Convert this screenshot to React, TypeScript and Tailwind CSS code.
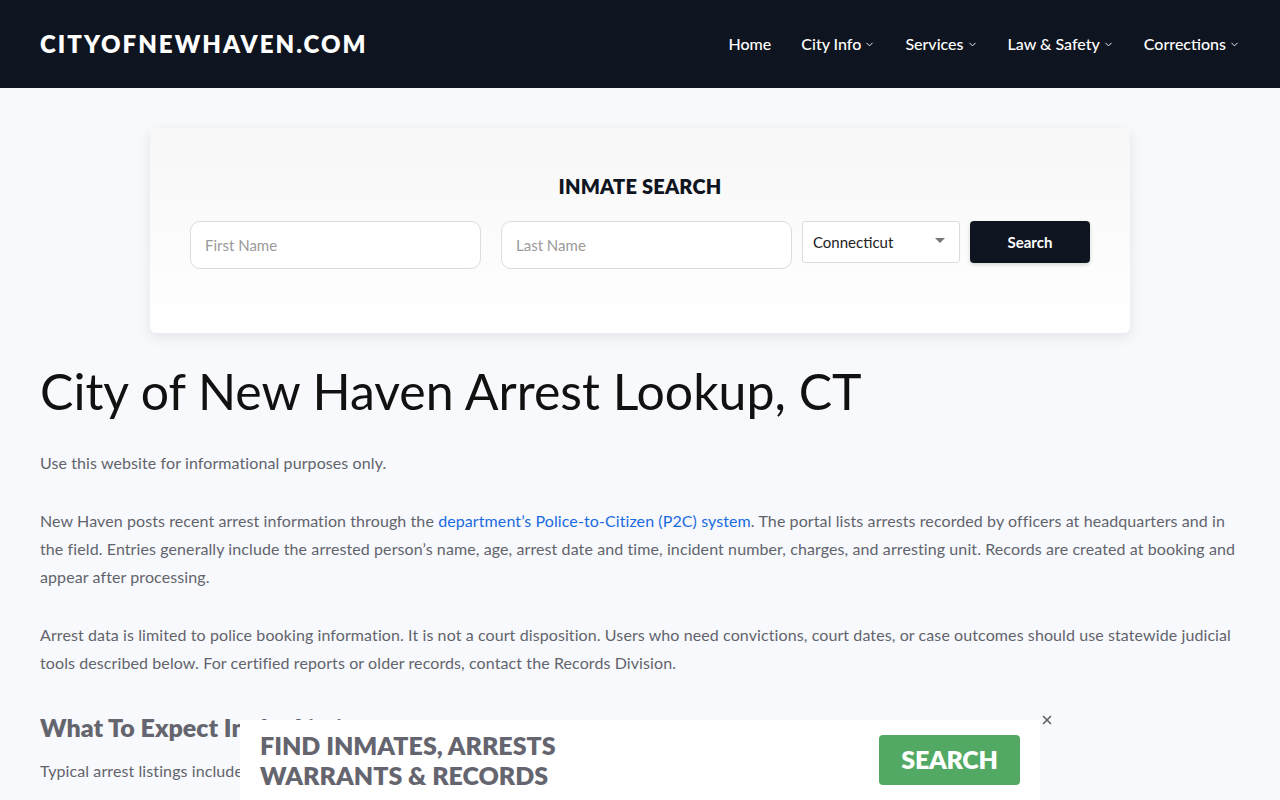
import { ChevronDown, X } from 'lucide-react';

const NAV = [
  { label: 'Home', menu: false },
  { label: 'City Info', menu: true },
  { label: 'Services', menu: true },
  { label: 'Law & Safety', menu: true },
  { label: 'Corrections', menu: true },
];

const FONT = "font-['Lato','Noto_Sans',sans-serif]";

export default function App() {
  return (
    <div className={`min-h-screen w-full bg-[#f8f9fc] ${FONT}`}>
      {/* Top bar */}
      <header className="h-[88px] bg-[#0f1520] flex items-center justify-between px-10">
        <a href="#" className="text-white font-extrabold text-[24px] tracking-[0.085em] uppercase">
          CITYOFNEWHAVEN.COM
        </a>
        <nav className="flex items-center gap-[30px] text-white text-[16px] font-medium">
          {NAV.map((n) => (
            <a key={n.label} href="#" className="flex items-center gap-[3px]">
              {n.label}
              {n.menu && <ChevronDown size={11} strokeWidth={2} />}
            </a>
          ))}
        </nav>
      </header>

      <main className="px-10 pb-32">
        {/* Search card */}
        <section className="mx-auto mt-10 w-[980px] rounded-md bg-gradient-to-b from-[#f7f7f7] to-white shadow-[0_4px_14px_rgba(0,0,0,0.09)] px-10 pt-[43px] pb-[64px]">
          <h2 className="text-center text-[20px] font-extrabold text-[#0f1520] tracking-[0.01em]">INMATE SEARCH</h2>
          <form className="mt-[20px] flex items-start gap-[10px]" onSubmit={(e) => e.preventDefault()}>
            <input
              placeholder="First Name"
              className="w-[291px] h-[48px] rounded-[10px] border border-[#dcdcdc] bg-white px-[14px] text-[15px] placeholder:text-[#9a9a9a] outline-none"
            />
            <input
              placeholder="Last Name"
              className="ml-[10px] w-[291px] h-[48px] rounded-[10px] border border-[#dcdcdc] bg-white px-[14px] text-[15px] placeholder:text-[#9a9a9a] outline-none"
            />
            <div className="relative w-[158px] h-[42px] rounded-[3px] border border-[#dcdcdc] bg-white flex items-center px-[10px] text-[15px] text-[#222]">
              Connecticut
              <span className="absolute right-[14px] top-[16px] w-0 h-0 border-l-[5px] border-r-[5px] border-t-[5px] border-l-transparent border-r-transparent border-t-[#777]" />
            </div>
            <button className="w-[120px] h-[42px] rounded-[4px] bg-[#0f1520] text-white text-[15px] font-bold shadow-[0_2px_4px_rgba(0,0,0,0.15)]">
              Search
            </button>
          </form>
        </section>

        {/* Article */}
        <article className="mt-[27px] text-[16px] leading-[28px] tracking-[0.006em] text-[#62646c]">
          <h1 className="text-[50px] leading-[62px] font-normal tracking-normal text-[#111111] mb-[27px]">City of New Haven Arrest Lookup, CT</h1>
          <p className="mb-[30px]">Use this website for informational purposes only.</p>
          <p className="mb-[30px]">
            New Haven posts recent arrest information through the{' '}
            <a href="#" className="text-[#1a6be0]">department’s Police-to-Citizen (P2C) system</a>. The portal lists arrests
            recorded by officers at headquarters and in the field. Entries generally include the arrested person’s name, age,
            arrest date and time, incident number, charges, and arresting unit. Records are created at booking and appear after
            processing.
          </p>
          <p className="mb-[34px]">
            Arrest data is limited to police booking information. It is not a court disposition. Users who need convictions,
            court dates, or case outcomes should use statewide judicial tools described below. For certified reports or older
            records, contact the Records Division.
          </p>
          <h2 className="text-[25px] leading-[32px] font-extrabold tracking-normal text-[#64656e] mb-[14px]">What To Expect In the Listings</h2>
          <p>Typical arrest listings include the name, age, booking date, charges, and the arresting unit.</p>
        </article>
      </main>

      {/* Bottom ad banner */}
      <div className="fixed bottom-0 left-[240px] w-[800px] h-[80px] bg-white flex items-center justify-between pl-5 pr-5">
        <p className="text-[25px] leading-[30px] font-extrabold text-[#65656f] uppercase">
          FIND INMATES, ARRESTS
          <br />
          WARRANTS &amp; RECORDS
        </p>
        <button className="w-[141px] h-[50px] rounded-[4px] bg-[#52a963] text-white text-[25px] font-extrabold tracking-[-0.01em]">
          SEARCH
        </button>
        <button className="absolute -right-[14px] -top-[7px] text-[#666]" aria-label="close">
          <X size={14} strokeWidth={3} />
        </button>
      </div>
    </div>
  );
}
